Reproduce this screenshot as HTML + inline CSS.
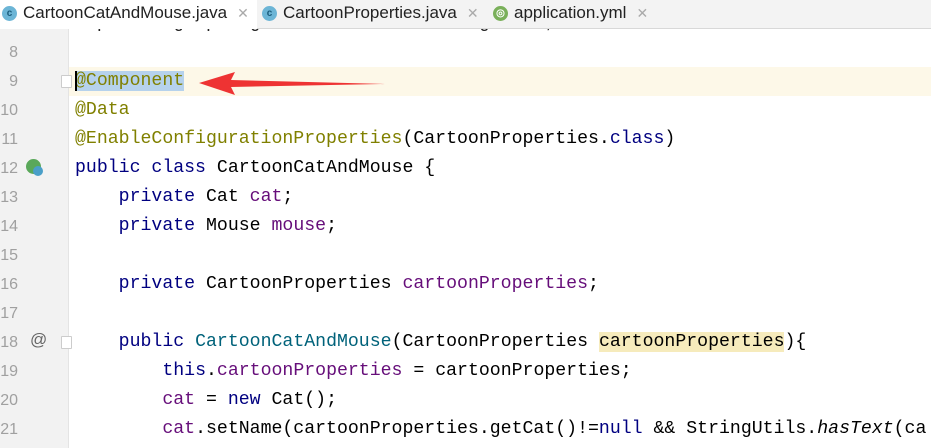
<!DOCTYPE html>
<html><head><style>
body{margin:0;width:931px;height:448px;overflow:hidden;background:#fff;font-family:"Liberation Mono",monospace;position:relative}
.wrap{position:absolute;left:0;top:0;width:931px;height:448px;overflow:hidden}
.gut{position:absolute;left:0;top:0;width:68px;height:448px;background:#f2f2f2;border-right:1px solid #e4e4e4}
.ln{position:absolute;left:0;width:18px;text-align:right;color:#a0a0a0;font-family:"Liberation Sans",sans-serif;font-size:16px;line-height:29px;height:29px}
.code{position:absolute;left:75px;font-size:18.2px;line-height:29px;height:29px;white-space:pre;color:#000}
.k{color:#000080}.a{color:#808000}.f{color:#660e7a}.m{color:#00627a}.i{font-style:italic}
.tabs{position:absolute;left:0;top:0;width:931px;height:28px;background:#f3f3f3;border-bottom:1px solid #d8d8d8;font-family:"Liberation Sans",sans-serif;font-size:17px;color:#222}
.tab{position:absolute;top:0;height:28px;line-height:26px}
.ic{display:inline-block;width:15px;height:15px;border-radius:50%;background:#6cb5d6;color:#1a5b7a;font-size:10px;line-height:15px;text-align:center;vertical-align:middle;margin-right:6px;font-weight:bold}
.x{color:#aaa;margin-left:10px;font-size:14px}
</style></head><body><div class="wrap">
<div style="position:absolute;left:68px;top:67px;width:863px;height:29px;background:#fdf8e8"></div>
<div class="gut"></div>
<div class="code" style="top:9px;color:#222">import org.springframework.util.StringUtils;</div>
<div class="ln" style="top:38px">8</div>
<div class="ln" style="top:67px">9</div><div class="code" style="top:67px"><span style="background:#b6d2ec" class="a">@Component</span></div>
<div style="position:absolute;left:75px;top:71px;width:2px;height:20px;background:#000"></div>
<div class="ln" style="top:96px">10</div><div class="code a" style="top:96px">@Data</div>
<div class="ln" style="top:125px">11</div><div class="code" style="top:125px"><span class="a">@EnableConfigurationProperties</span>(CartoonProperties.<span class="k">class</span>)</div>
<div class="ln" style="top:154px">12</div><div class="code" style="top:154px"><span class="k">public class</span> CartoonCatAndMouse {</div>
<div class="ln" style="top:183px">13</div><div class="code" style="top:183px">    <span class="k">private</span> Cat <span class="f">cat</span>;</div>
<div class="ln" style="top:212px">14</div><div class="code" style="top:212px">    <span class="k">private</span> Mouse <span class="f">mouse</span>;</div>
<div class="ln" style="top:241px">15</div>
<div class="ln" style="top:270px">16</div><div class="code" style="top:270px">    <span class="k">private</span> CartoonProperties <span class="f">cartoonProperties</span>;</div>
<div class="ln" style="top:299px">17</div>
<div class="ln" style="top:328px">18</div><div class="code" style="top:328px">    <span class="k">public</span> <span class="m">CartoonCatAndMouse</span>(CartoonProperties <span style="background:#f6ebbc">cartoonProperties</span>){</div>
<div class="ln" style="top:357px">19</div><div class="code" style="top:357px">        <span class="k">this</span>.<span class="f">cartoonProperties</span> = cartoonProperties;</div>
<div class="ln" style="top:386px">20</div><div class="code" style="top:386px">        <span class="f">cat</span> = <span class="k">new</span> Cat();</div>
<div class="ln" style="top:415px">21</div><div class="code" style="top:415px">        <span class="f">cat</span>.setName(cartoonProperties.getCat()!=<span class="k">null</span> &amp;&amp; StringUtils.<span class="i">hasText</span>(ca</div>
<div style="position:absolute;left:26px;top:159px;width:15px;height:15px;border-radius:50%;background:#5aa85a"></div>
<div style="position:absolute;left:33px;top:166px;width:10px;height:10px;border-radius:50%;background:#4a9fc8"></div>
<div style="position:absolute;left:30px;top:330px;font-family:'Liberation Sans',sans-serif;font-size:17px;color:#666">@</div>
<div style="position:absolute;left:61px;top:75px;width:9px;height:11px;border:1px solid #ccc;background:#fff;border-radius:1px"></div>
<div style="position:absolute;left:61px;top:336px;width:9px;height:11px;border:1px solid #ccc;background:#fff;border-radius:1px"></div>
<svg style="position:absolute;left:195px;top:68px" width="200" height="30"><polygon points="4,15 40,4 36,12 190,16 36,19 40,27" fill="#ee3333"/></svg>
<div class="tabs">
<div class="tab" style="left:0;width:255px;background:#fff;height:29px;padding-left:2px"><span class="ic">c</span>CartoonCatAndMouse.java<span class="x">✕</span></div>
<div class="tab" style="left:262px"><span class="ic">c</span>CartoonProperties.java<span class="x">✕</span></div>
<div class="tab" style="left:493px"><span class="ic" style="background:#7ab05a;color:#fff">◎</span>application.yml<span class="x">✕</span></div>
</div>
</div></body></html>
